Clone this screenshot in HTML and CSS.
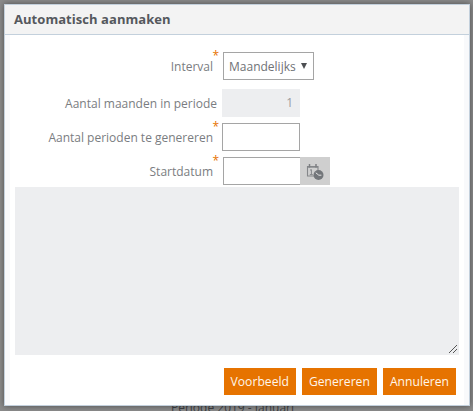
FILE: index.html
```html
<!DOCTYPE html>
<html lang="nl">
<head>
<meta charset="utf-8">
<title>Automatisch aanmaken</title>
<link rel="stylesheet" href="styles.css">
</head>
<body>
<div class="backdrop">
  <p class="behind">Periode 2019 - Januari</p>
</div>
<div class="dialog">
  <header class="dialog-head">Automatisch aanmaken</header>
  <div class="dialog-body">
    <form class="form">
      <div class="row row-interval">
        <label class="label required">Interval</label>
        <div class="select"><span>Maandelijks</span><i class="caret"></i></div>
      </div>
      <div class="row row-months">
        <label class="label label-plain">Aantal maanden in periode</label>
        <div class="readonly">1</div>
      </div>
      <div class="row row-count">
        <label class="label required">Aantal perioden te genereren</label>
        <div class="input"></div>
      </div>
      <div class="row row-date">
        <label class="label required">Startdatum</label>
        <div class="input input-date"></div>
        <div class="date-btn">
          <svg width="18" height="18" viewBox="0 0 18 18" aria-hidden="true">
            <path d="M1.5 4.5h10.5v9.5h-10.5z" fill="none" stroke="#85878a" stroke-width="1.1"/>
            <path d="M1.5 4.5h10.5v1.2h-10.5z" fill="#85878a"/>
            <path d="M3.5 2v3.5M10 2v3.5" stroke="#7d7f82" stroke-width="1.5"/>
            <path d="M4 8.2l1.4-.6v5M3.8 12.6h3" fill="none" stroke="#85878a" stroke-width="1"/>
            <circle cx="12.5" cy="13" r="5" fill="#73767a"/>
            <path d="M9.8 10.8l3 2.4h2.6" fill="none" stroke="#e4e4e4" stroke-width="1"/>
          </svg>
        </div>
      </div>
    </form>
    <div class="textarea">
      <svg class="grip" width="10" height="10" viewBox="0 0 10 10" aria-hidden="true">
        <path d="M1 9l8-8M5 9l4-4" stroke="#555" stroke-width="1"/>
      </svg>
    </div>
    <div class="actions">
      <button class="btn" type="button">Voorbeeld</button>
      <button class="btn" type="button">Genereren</button>
      <button class="btn" type="button">Annuleren</button>
    </div>
  </div>
</div>
</body>
</html>
```
FILE: styles.css
```css
html, body {
  margin: 0;
  height: 100%;
  overflow: hidden;
}
body {
  font-family: "Open Sans", sans-serif;
  font-size: 12px;
  color: #7a7d81;
  background: #8b8b8b;
}
.backdrop {
  height: 411px;
  overflow: hidden;
}
.behind {
  margin: 0;
  padding-top: 399px;
  text-align: center;
  font-size: 12px;
  line-height: 18px;
  color: #3e4145;
  transform: translateX(-4px);
}
.dialog {
  position: absolute;
  left: 4px;
  top: 4px;
  width: 466px;
  height: 402px;
  box-sizing: border-box;
  background: #fff;
  border: 1px solid #c3d0dc;
  box-shadow: 0 0 6px rgba(0,0,0,.45);
  display: flex;
  flex-direction: column;
}
.dialog-head {
  height: 30px;
  box-sizing: border-box;
  padding: 5px 9px 0;
  font-weight: 700;
  font-size: 13px;
  letter-spacing: .05px;
  line-height: 18px;
  color: #55585d;
  background: #f3f3f3;
  border-bottom: 1px solid #c3d0dc;
  flex: none;
}
.dialog-body {
  flex: 1;
  display: flex;
  flex-direction: column;
  padding: 0 5px;
  border-left: 5px solid #f8f9fb;
  border-right: 5px solid #f8f9fb;
}
.form {
  display: flex;
  flex-direction: column;
  flex: none;
  height: 152px;
}
.row {
  display: flex;
  align-items: center;
}
.row-interval { margin-top: 17px; height: 28px; }
.row-months { margin-top: 9px; height: 28px; }
.row-count { margin-top: 6px; height: 28px; }
.row-date { margin-top: 6px; height: 28px; }
.label {
  position: relative;
  text-align: right;
  line-height: 18px;
  padding-top: 2px;
}
.row-interval .label { width: 198px; }
.row-months .label { width: 202px; }
.row-count .label { width: 198px; }
.row-date .label { width: 198px; }
.required::after {
  content: "*";
  position: absolute;
  right: -6px;
  top: -9px;
  color: #e67300;
  font-size: 12px;
}
.select {
  margin-left: 10px;
  width: 91px;
  height: 28px;
  box-sizing: border-box;
  border: 1px solid #a5a5a5;
  display: flex;
  align-items: center;
  padding: 0 6px 0 5px;
  justify-content: space-between;
  color: #6f7276;
  background: #fff;
}
.caret {
  width: 0;
  height: 0;
  border-left: 3.5px solid transparent;
  border-right: 3.5px solid transparent;
  border-top: 6px solid #4d4f52;
}
.readonly {
  margin-left: 5px;
  width: 78px;
  height: 28px;
  box-sizing: border-box;
  background: #edeef0;
  color: #9a9c9f;
  text-align: right;
  padding: 5px 7px 0 0;
  line-height: 18px;
}
.input {
  margin-left: 9px;
  width: 78px;
  height: 28px;
  box-sizing: border-box;
  border: 1px solid #a5a5a5;
  background: #fff;
}
.input-date {
  margin-left: 10px;
  width: 77px;
  border-right: 0;
}
.date-btn {
  width: 30px;
  height: 28px;
  background: #cfcfcf;
  display: flex;
  align-items: center;
  justify-content: center;
}
.textarea {
  position: relative;
  height: 168px;
  background: #edeef0;
  flex: none;
}
.grip {
  position: absolute;
  right: 1px;
  bottom: 1px;
}
.actions {
  display: flex;
  justify-content: flex-end;
  gap: 6px;
  margin-top: 13px;
  padding-right: 3px;
}
.btn {
  height: 27px;
  padding: 0 7px;
  border: 0;
  background: #e67300;
  color: #fff6ea;
  font-family: inherit;
  font-size: 12.15px;
  line-height: 27px;
}
```
